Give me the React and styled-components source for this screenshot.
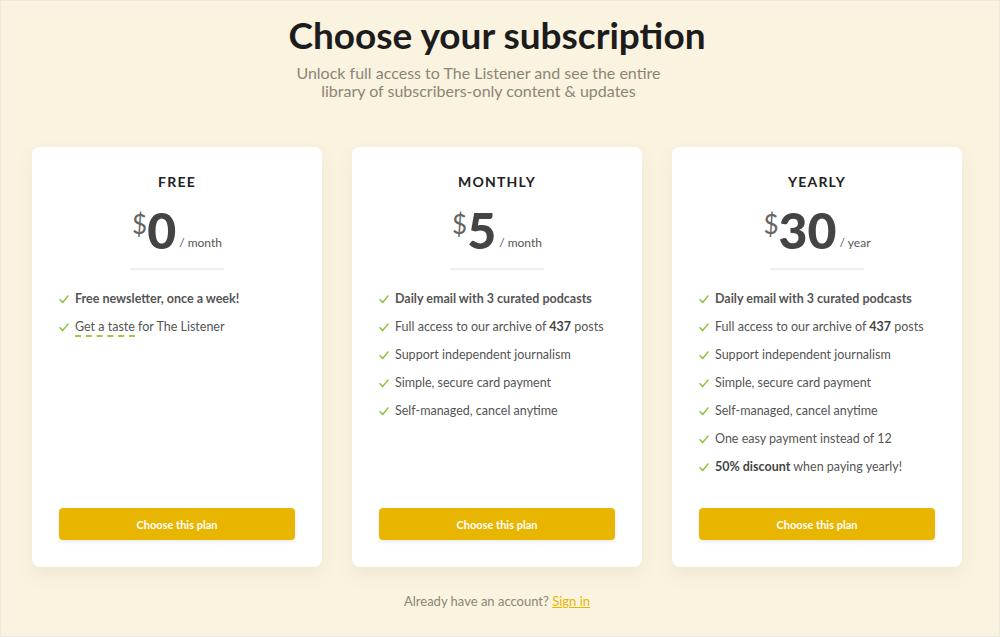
import React from "react";
import styled, { createGlobalStyle } from "styled-components";

const GlobalStyle = createGlobalStyle`
  html, body {
    margin: 0;
    padding: 0;
    background: #faf3e0;
  }
  body {
    font-family: "Lato", "Noto Sans", sans-serif;
    color: #4a4a4a;
  }
`;

const Page = styled.div`
  min-height: 635px;
  border: 1px solid #ece9e1;
  padding-right: 6px;
  display: flex;
  flex-direction: column;
  align-items: center;
`;

const Header = styled.header`
  padding-top: 13px;
  text-align: center;
`;

const Title = styled.h1`
  margin: 0;
  font-size: 37px;
  line-height: 42px;
  font-weight: 700;
  color: #1c1c1c;
`;

const Subtitle = styled.p`
  margin: 8px 0 0;
  font-size: 16px;
  line-height: 18px;
  color: #8c8576;
  width: 380px;
`;

const Plans = styled.div`
  display: flex;
  gap: 30px;
  margin-top: 47px;
`;

const Card = styled.div`
  width: 290px;
  height: 420px;
  box-sizing: border-box;
  background: #fff;
  border-radius: 8px;
  box-shadow: 0 8px 18px rgba(120, 100, 40, 0.08);
  padding: 26px 27px 27px;
  display: flex;
  flex-direction: column;
`;

const PlanName = styled.h2`
  margin: 0;
  text-align: center;
  font-size: 14px;
  line-height: 18px;
  font-weight: 700;
  letter-spacing: 1.2px;
  color: #222;
`;

const Price = styled.div`
  display: flex;
  justify-content: center;
  align-items: flex-end;
  margin-top: 9px;
  height: 56px;
`;

const Currency = styled.span`
  align-self: flex-start;
  font-size: 26px;
  line-height: 30px;
  font-weight: 400;
  color: #666;
  margin-top: 9px;
`;

const Amount = styled.span`
  font-size: 50px;
  line-height: 50px;
  font-weight: 900;
  color: #444;
  margin-bottom: 1px;
`;

const Period = styled.span`
  font-size: 12px;
  line-height: 18px;
  color: #555;
  margin-left: 3px;
  margin-bottom: 4px;
`;

const Divider = styled.hr`
  width: 94px;
  border: none;
  border-top: 2px solid #f1f0ee;
  margin: 12px auto 0;
`;

const Features = styled.ul`
  list-style: none;
  margin: 20px 0 0;
  padding: 0;
  display: flex;
  flex-direction: column;
  gap: 10px;
`;

const Feature = styled.li`
  display: flex;
  align-items: center;
  gap: 6px;
  font-size: 12.5px;
  line-height: 18px;
  color: #555;
  font-weight: ${(p) => (p.$bold ? 700 : 400)};

  b {
    font-weight: 700;
    color: #444;
  }
`;

const Taste = styled.span`
  border-bottom: 2px dashed #9ccc3d;
  padding-bottom: 1px;
`;

const PlanButton = styled.button`
  margin-top: auto;
  width: 100%;
  height: 32px;
  border: none;
  border-radius: 4px;
  background: #e8b500;
  color: #fff;
  font-family: inherit;
  font-size: 11px;
  font-weight: 700;
  box-shadow: 0 2px 4px rgba(0, 0, 0, 0.08);
  cursor: pointer;
`;

const Footer = styled.p`
  margin: 25px 0 0;
  font-size: 13px;
  line-height: 18px;
  color: #8c8576;

  a {
    color: #e8b500;
    text-decoration: underline;
  }
`;

const Check = () => (
  <svg width="10" height="9" viewBox="0 0 10 9" fill="none">
    <path d="M1 4.8 L3.6 7.6 L9 1" stroke="#8dc43f" strokeWidth="1.5" strokeLinecap="round" strokeLinejoin="round" />
  </svg>
);

const common = [
  <>Support independent journalism</>,
  <>Simple, secure card payment</>,
  <>Self-managed, cancel anytime</>,
];

const plans = [
  {
    name: "FREE",
    amount: "0",
    period: "month",
    features: [
      { bold: true, text: <>Free newsletter, once a week!</> },
      { text: <><Taste>Get a taste</Taste> for The Listener</> },
    ],
  },
  {
    name: "MONTHLY",
    amount: "5",
    period: "month",
    features: [
      { bold: true, text: <>Daily email with 3 curated podcasts</> },
      { text: <>Full access to our archive of <b>437</b> posts</> },
      ...common.map((text) => ({ text })),
    ],
  },
  {
    name: "YEARLY",
    amount: "30",
    period: "year",
    features: [
      { bold: true, text: <>Daily email with 3 curated podcasts</> },
      { text: <>Full access to our archive of <b>437</b> posts</> },
      ...common.map((text) => ({ text })),
      { text: <>One easy payment instead of 12</> },
      { text: <><b>50% discount</b> when paying yearly!</> },
    ],
  },
];

export default function App() {
  return (
    <Page>
      <GlobalStyle />
      <Header>
        <Title>Choose your subscription</Title>
        <Subtitle>
          Unlock full access to The Listener and see the entire library of
          subscribers-only content &amp; updates
        </Subtitle>
      </Header>
      <Plans>
        {plans.map((plan) => (
          <Card key={plan.name}>
            <PlanName>{plan.name}</PlanName>
            <Price>
              <Currency>$</Currency>
              <Amount>{plan.amount}</Amount>
              <Period>/ {plan.period}</Period>
            </Price>
            <Divider />
            <Features>
              {plan.features.map((f, i) => (
                <Feature key={i} $bold={f.bold}>
                  <Check />
                  <span>{f.text}</span>
                </Feature>
              ))}
            </Features>
            <PlanButton>Choose this plan</PlanButton>
          </Card>
        ))}
      </Plans>
      <Footer>
        Already have an account? <a href="#">Sign in</a>
      </Footer>
    </Page>
  );
}
